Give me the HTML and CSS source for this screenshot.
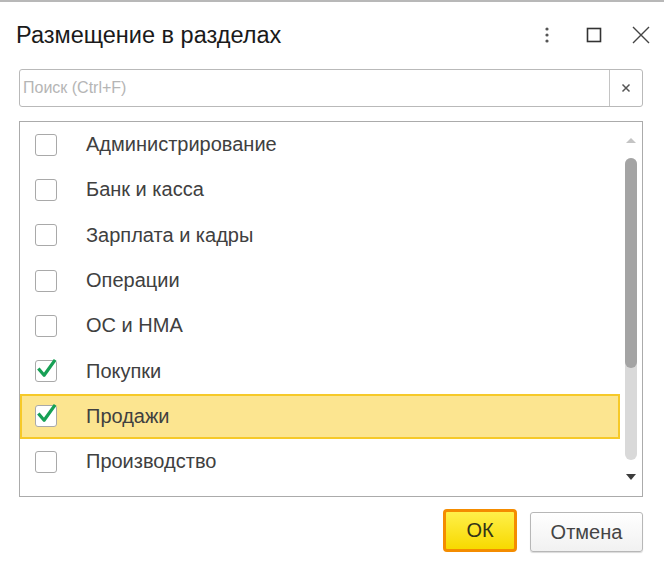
FILE: index.html
```html
<!DOCTYPE html>
<html>
<head>
	<meta charset="utf-8">
	<title>Размещение в разделах</title>
	<link rel="stylesheet" href="styles.css">
</head>
<body>
	<div class="dialog">
		<div class="header">
			<div class="title">Размещение в разделах</div>
			<svg class="icon" width="20" height="20" viewBox="0 0 20 20">
				<circle cx="10" cy="4" r="1.6" fill="#555"/>
				<circle cx="10" cy="10" r="1.6" fill="#555"/>
				<circle cx="10" cy="16" r="1.6" fill="#555"/>
			</svg>
			<svg class="icon" width="20" height="20" viewBox="0 0 20 20">
				<rect x="3.5" y="3.5" width="13" height="13" fill="none" stroke="#333" stroke-width="1.6"/>
			</svg>
			<svg class="icon" width="20" height="20" viewBox="0 0 20 20">
				<path d="M2 2 L18 18 M18 2 L2 18" stroke="#444" stroke-width="1.4" fill="none"/>
			</svg>
		</div>

		<div class="search">
			<div class="search-input">Поиск (Ctrl+F)</div>
			<div class="search-clear">
				<svg width="10" height="10" viewBox="0 0 10 10">
					<path d="M1.5 1.5 L8.5 8.5 M8.5 1.5 L1.5 8.5" stroke="#555" stroke-width="1.5"/>
				</svg>
			</div>
		</div>

		<div class="list">
			<div class="rows">
				<div class="row"><span class="check"></span><span class="label">Администрирование</span></div>
				<div class="row"><span class="check"></span><span class="label">Банк и касса</span></div>
				<div class="row"><span class="check"></span><span class="label">Зарплата и кадры</span></div>
				<div class="row"><span class="check"></span><span class="label">Операции</span></div>
				<div class="row"><span class="check"></span><span class="label">ОС и НМА</span></div>
				<div class="row"><span class="check checked"><svg viewBox="0 0 24 24"><path d="M3.5 12 L9.5 19 L21 3"/></svg></span><span class="label">Покупки</span></div>
				<div class="row current"><span class="check checked"><svg viewBox="0 0 24 24"><path d="M3.5 12 L9.5 19 L21 3"/></svg></span><span class="label">Продажи</span></div>
				<div class="row"><span class="check"></span><span class="label">Производство</span></div>
			</div>
			<div class="scrollbar">
				<div class="arrow-up"></div>
				<div class="track"><div class="thumb"></div></div>
				<div class="arrow-down"></div>
			</div>
		</div>

		<div class="buttons">
			<div class="btn btn-ok">ОК</div>
			<div class="btn btn-cancel">Отмена</div>
		</div>
	</div>
</body>
</html>
```

FILE: styles.css
```css
	html, body{
		margin: 0;
		padding: 0;
		background: #fff;
	}
	body{
		font-family: "Liberation Sans", Arial, sans-serif;
	}
	.dialog{
		width: 664px;
		height: 564px;
		border-top: 2px solid #b8b8b8;
		overflow: hidden;
	}

	/* header */
	.header{
		display: flex;
		align-items: center;
		gap: 27px;
		padding: 19px 13px 0 16px;
		height: 28px;
	}
	.title{
		flex: 1;
		font-size: 23.5px;
		line-height: 28px;
		color: #1a1a1a;
	}
	.icon{
		display: block;
	}

	/* search */
	.search{
		display: flex;
		margin: 20px 21px 0 19px;
		height: 36px;
		border: 1px solid #b9b9b9;
		border-radius: 3px;
	}
	.search-input{
		flex: 1;
		padding-left: 3px;
		font-size: 16px;
		line-height: 36px;
		color: #b5b5b5;
	}
	.search-clear{
		width: 32px;
		border-left: 1px solid #c4c4c4;
		display: flex;
		align-items: center;
		justify-content: center;
	}
	.search-clear svg{
		display: block;
	}

	/* list */
	.list{
		display: flex;
		margin: 14px 21px 0 19px;
		height: 374px;
		border: 1px solid #ababab;
	}
	.rows{
		flex: 1;
	}
	.row{
		display: flex;
		align-items: center;
		height: 45.3px;
		box-sizing: border-box;
		padding-left: 15px;
		border: 2px solid transparent;
		border-left: 0;
	}
	.row.current{
		background: #fce590;
		border-color: #f6c928;
		border-left: 2px solid #f6c928;
		padding-left: 13px;
	}
	.check{
		position: relative;
		width: 20px;
		height: 20px;
		border: 1px solid #a9a9a9;
		border-radius: 3px;
		background: #fff;
		flex-shrink: 0;
	}
	.check svg{
		position: absolute;
		left: -1px;
		top: -4px;
		width: 23px;
		height: 23px;
		fill: none;
		stroke: #17a055;
		stroke-width: 3.4;
		stroke-linejoin: round;
	}
	.label{
		margin-left: 29px;
		font-size: 20px;
		color: #404040;
	}

	/* scrollbar */
	.scrollbar{
		width: 22px;
		display: flex;
		flex-direction: column;
		align-items: center;
	}
	.arrow-up{
		margin-top: 16px;
		width: 0;
		height: 0;
		border-left: 5px solid transparent;
		border-right: 5px solid transparent;
		border-bottom: 5px solid #c4c4c4;
	}
	.track{
		margin-top: 15px;
		width: 12px;
		height: 302px;
		background: #d9d9d9;
		border-radius: 6px;
	}
	.thumb{
		height: 210px;
		background: #a4a4a4;
		border-radius: 6px;
	}
	.arrow-down{
		margin-top: 14px;
		width: 0;
		height: 0;
		border-left: 5px solid transparent;
		border-right: 5px solid transparent;
		border-top: 6px solid #3c3c3c;
	}

	/* buttons */
	.buttons{
		display: flex;
		justify-content: flex-end;
		align-items: flex-end;
		gap: 13px;
		margin-top: 12px;
		padding-right: 21px;
	}
	.btn{
		box-sizing: border-box;
		text-align: center;
		font-size: 20px;
	}
	.btn-ok{
		width: 74px;
		height: 43px;
		line-height: 37px;
		border: 3px solid #f48c00;
		border-radius: 4px;
		background: linear-gradient(#fff04a, #f7d900);
		color: #333318;
	}
	.btn-cancel{
		width: 113px;
		height: 40px;
		line-height: 38px;
		border: 1px solid #b7b7b7;
		border-radius: 3px;
		background: linear-gradient(#ffffff, #f1f1f1);
		box-shadow: 0 1px 1px rgba(0,0,0,0.15);
		color: #444;
	}
```
